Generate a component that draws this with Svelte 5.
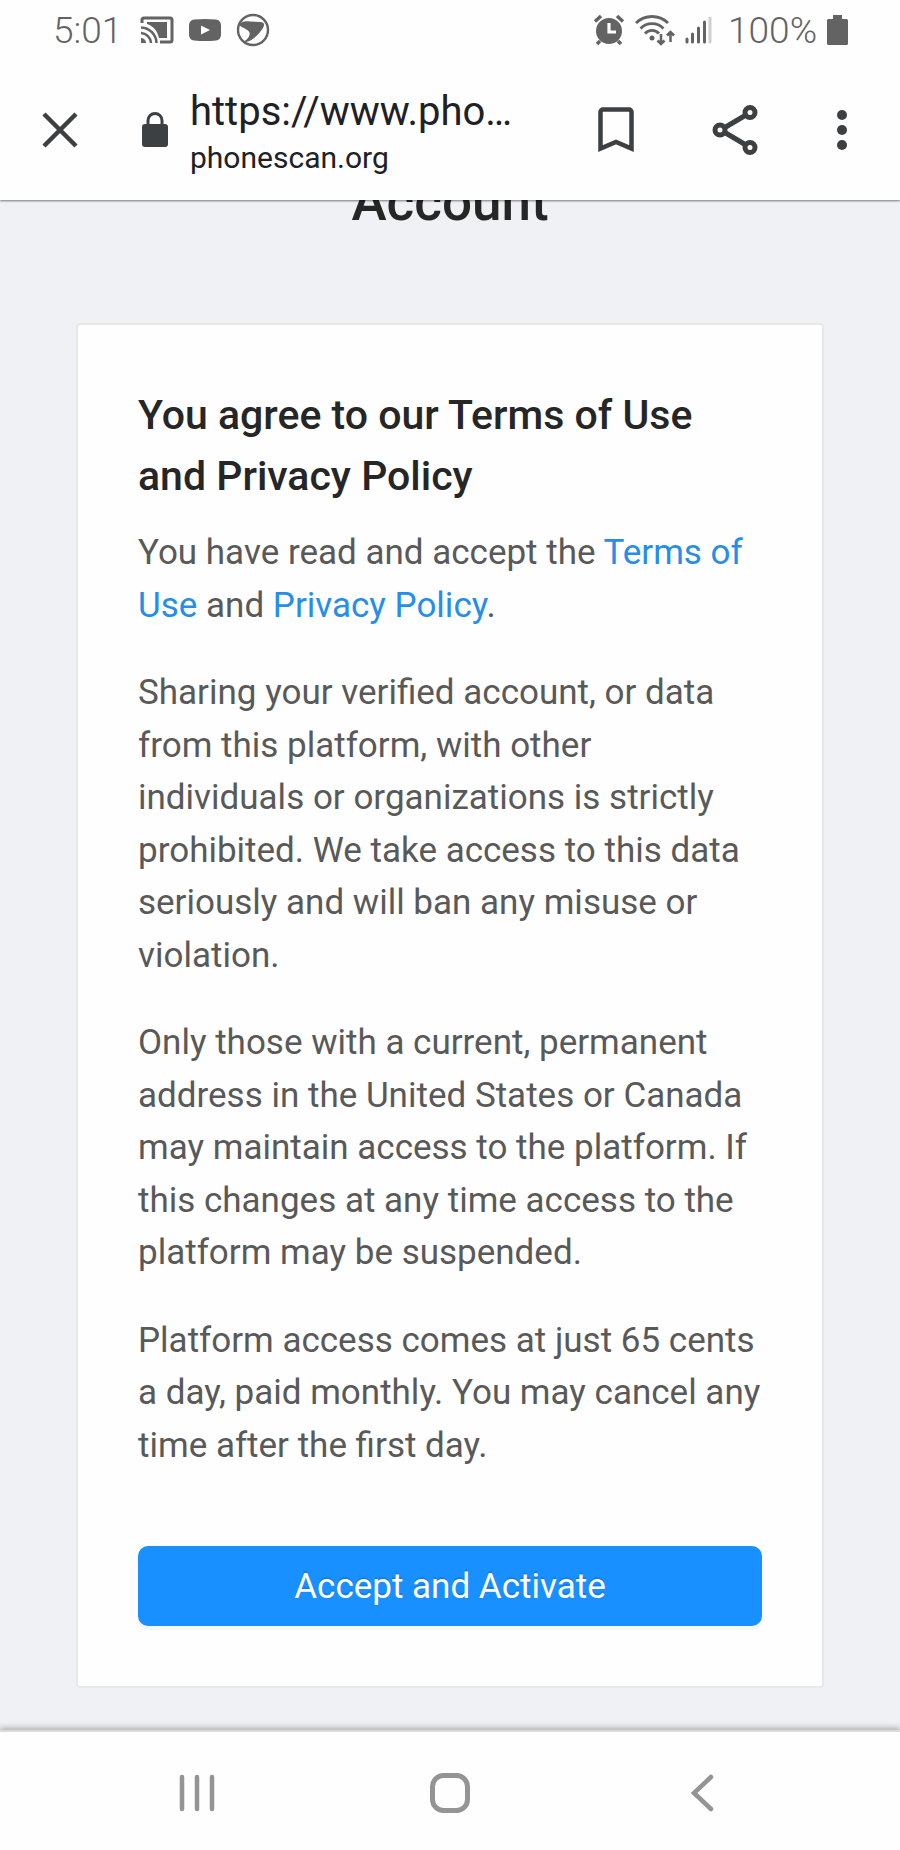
<script lang="ts">
  /**
   * Account agreement page, shown inside a mobile in-app browser
   */

  const url = "https://www.phonescan.org/account";
  const host = "phonescan.org";

  const terms: string[] = [
    "Sharing your verified account, or data from this platform, with other individuals or organizations is strictly prohibited. We take access to this data seriously and will ban any misuse or violation.",
    "Only those with a current, permanent address in the United States or Canada may maintain access to the platform. If this changes at any time access to the platform may be suspended.",
    "Platform access comes at just 65 cents a day, paid monthly. You may cancel any time after the first day.",
  ];

  let accepted = $state(false);
</script>

<div class="screen">
  <div class="top">
    <div class="status-bar">
      <div class="status-group">
        <span>5:01</span>
        <svg class="cast" width="34" height="28" viewBox="0 0 34 28" fill="none">
          <path d="M2 7V4a2 2 0 0 1 2-2h26a2 2 0 0 1 2 2v20a2 2 0 0 1-2 2H20" stroke="currentColor" stroke-width="3" />
          <path d="M7 6h20v16h-8C17 14 13 10 7 8z" fill="currentColor" />
          <path d="M1 11.500a16 16 0 0 1 15.500 15.500M1 17a10.500 10.500 0 0 1 10 10" stroke="currentColor" stroke-width="2.500" />
          <path d="M1 22a5 5 0 0 1 5 5H1z" fill="currentColor" />
        </svg>
        <svg width="34" height="24" viewBox="0 0 34 24">
          <path
            fill="currentColor"
            fill-rule="evenodd"
            d="M6 1.500Q17 .5 28 1.500Q32.500 2 33 7V17Q32.500 22 28 22.500Q17 23.500 6 22.500Q1.500 22 1 17V7Q1.500 2 6 1.500zM13 7.500v9l9-4.500z"
          />
        </svg>
        <svg width="34" height="34" viewBox="0 0 34 34" fill="none">
          <circle cx="17" cy="17" r="15" stroke="currentColor" stroke-width="2.400" />
          <path
            fill="currentColor"
            d="M3 12C6 8 9 8 14 8.500L25 9C28.500 9.500 28.500 12 27.500 14C24 20 18 27 10 29L8 28.500C13 25 14 22 13.500 19.500C12 16 6 15 3 12z"
          />
        </svg>
      </div>
      <div class="status-group right">
        <svg width="32" height="32" viewBox="0 0 32 32" fill="none">
          <path d="M2 7.500 8 2M24 2l6 5.500M7 27l-3 3M25 27l3 3" stroke="currentColor" stroke-width="3.500" />
          <circle cx="16" cy="17" r="13" fill="currentColor" />
          <path d="M16 9v9h7" stroke="#fff" stroke-width="3.200" />
        </svg>
        <svg width="40" height="32" viewBox="0 0 40 32" fill="none" stroke="currentColor">
          <path d="M1 9a23 23 0 0 1 32 0M5.500 14.500a16 16 0 0 1 23 0M10 19.500a9.500 9.500 0 0 1 14 0" stroke-width="2.800" />
          <circle cx="17" cy="24" r="2.500" fill="currentColor" stroke="none" />
          <path d="M26 20v10M22.500 26.500 26 30l3.500-3.500M35.500 28V18M32 21.500l3.500-3.500 3.500 3.500" stroke-width="2.500" />
        </svg>
        <svg width="27" height="30" viewBox="0 0 27 30" fill="none" stroke="currentColor" stroke-width="3" stroke-linecap="round">
          <path d="M2 24v3M7.500 19v8M13.500 13v14M19.500 7v20" />
          <path d="M25 3v24" opacity=".3" />
        </svg>
        <span class="percent">100%</span>
        <svg width="21" height="30" viewBox="0 0 21 30" fill="currentColor">
          <path d="M6 0h9v4h4.500Q21 4 21 5.500v23q0 1.500-1.500 1.500h-18Q0 30 0 28.500v-23Q0 4 1.500 4H6z" />
        </svg>
      </div>
    </div>

    <header class="toolbar">
      <button class="icon-btn" aria-label="Close">
        <svg width="36" height="36" viewBox="0 0 36 36" stroke="currentColor" stroke-width="4.500">
          <path d="m2 2 32 32M34 2 2 34" />
        </svg>
      </button>
      <svg class="lock" width="28" height="36" viewBox="0 0 28 36" fill="none">
        <rect x="1" y="12" width="26" height="23" rx="3" fill="currentColor" />
        <path d="M7 13V8.500a7 7 0 0 1 14 0V13" stroke="currentColor" stroke-width="3" />
      </svg>
      <div class="address">
        <div class="url">{url}</div>
        <div class="host">{host}</div>
      </div>
      <div class="actions">
        <button class="icon-btn" aria-label="Bookmark">
          <svg width="36" height="46" viewBox="0 0 36 46" fill="none">
            <path d="M2.500 41.500V5a2.500 2.500 0 0 1 2.500-2.500h26A2.500 2.500 0 0 1 33.500 5v36.500L18 35z" stroke="currentColor" stroke-width="4.500" />
          </svg>
        </button>
        <button class="icon-btn" aria-label="Share">
          <svg width="46" height="50" viewBox="0 0 46 50" fill="none" stroke="currentColor" stroke-width="5">
            <path d="m12 23 22-13M12 27l22 13" />
            <circle cx="8" cy="25" r="5" />
            <circle cx="38" cy="7.500" r="5" />
            <circle cx="38" cy="42.500" r="5" />
          </svg>
        </button>
        <button class="icon-btn" aria-label="More options">
          <svg width="12" height="42" viewBox="0 0 12 42" fill="currentColor">
            <circle cx="6" cy="6" r="5" />
            <circle cx="6" cy="21" r="5" />
            <circle cx="6" cy="36" r="5" />
          </svg>
        </button>
      </div>
    </header>
  </div>

  <main class="content">
    <h1>Account</h1>
    <section class="card">
      <h2>You agree to our Terms of Use and Privacy Policy</h2>
      <p>
        You have read and accept the <a href="#terms">Terms of Use</a> and
        <a href="#privacy">Privacy Policy</a>.
      </p>
      {#each terms as paragraph}
        <p>{paragraph}</p>
      {/each}
      <button class="accept" aria-pressed={accepted} onclick={() => (accepted = true)}>
        Accept and Activate
      </button>
    </section>
  </main>

  <nav class="nav-bar">
    <button class="icon-btn" aria-label="Recent apps">
      <svg width="40" height="42" viewBox="0 0 40 42" fill="none" stroke="currentColor" stroke-width="4.500" stroke-linecap="round">
        <path d="M5 5v32M20 5v32M35 5v32" />
      </svg>
    </button>
    <button class="icon-btn" aria-label="Home">
      <svg width="42" height="42" viewBox="0 0 42 42" fill="none">
        <rect x="3.500" y="3.500" width="35" height="35" rx="11" stroke="currentColor" stroke-width="5" />
      </svg>
    </button>
    <button class="icon-btn" aria-label="Back">
      <svg width="42" height="42" viewBox="0 0 42 42" fill="none" stroke="currentColor" stroke-width="4.500" stroke-linecap="round">
        <path d="M29 5 12 21l17 16" />
      </svg>
    </button>
  </nav>
</div>

<style>
  :global(body) {
    margin: 0;
    background: #fefefe;
  }

  .screen {
    display: flex;
    flex-direction: column;
    min-height: 100vh;
    font-family: Roboto, "Liberation Sans", sans-serif;
    background: #fefefe;
  }

  svg {
    display: block;
    flex: none;
  }

  .top {
    position: relative;
    z-index: 1;
    background: #fefefe;
    box-shadow: 0 1px 2px rgba(0, 0, 0, 0.5);
  }

  .status-bar {
    display: flex;
    align-items: center;
    justify-content: space-between;
    height: 60px;
    padding: 0 52px 0 53px;
    color: #636363;
    font-size: 37px;
    font-weight: 300;
    line-height: 60px;
  }

  .status-bar span {
    padding-top: 2px;
  }

  .status-group {
    display: flex;
    align-items: center;
    gap: 14px;
  }

  .status-group.right {
    gap: 10px;
  }

  .cast {
    margin-left: 4px;
  }

  .percent {
    margin-left: 6px;
  }

  .icon-btn {
    display: flex;
    align-items: center;
    justify-content: center;
    padding: 0;
    border: none;
    background: none;
    color: inherit;
    cursor: pointer;
  }

  .toolbar {
    display: flex;
    align-items: center;
    height: 140px;
    padding: 0 52px 0 42px;
    box-sizing: border-box;
    color: #3c4043;
  }

  .lock {
    margin: 0 21px 0 63px;
  }

  .address {
    flex: 1;
    min-width: 0;
    padding-top: 6px;
    color: #202124;
  }

  .url {
    overflow: hidden;
    font-size: 40px;
    line-height: 50px;
    text-overflow: ellipsis;
    white-space: nowrap;
  }

  .host {
    font-size: 30px;
    line-height: 42px;
  }

  .actions {
    display: flex;
    align-items: center;
    gap: 78px;
    margin-left: 76px;
  }

  .content {
    flex: 1;
    overflow: hidden;
    padding: 0 76px 40px;
    background: #f0f1f5;
  }

  /* the page is scrolled so the heading sits half under the toolbar */
  h1 {
    margin: -35px 0 83px;
    color: #262626;
    font-size: 53px;
    font-weight: 500;
    line-height: 75px;
    text-align: center;
  }

  .card {
    padding: 60px;
    border: 2px solid #e8e8e8;
    border-radius: 4px;
    background: #fefefe;
  }

  h2 {
    margin: 0 0 20px;
    color: #262626;
    font-size: 41px;
    font-weight: 500;
    line-height: 61px;
  }

  p {
    margin: 0 0 35px;
    color: #595959;
    font-size: 35px;
    line-height: 1.5;
  }

  a {
    color: #268ee8;
    text-decoration: none;
  }

  .accept {
    display: block;
    width: 100%;
    height: 80px;
    margin-top: 74px;
    border: none;
    border-radius: 10px;
    background: #1890ff;
    box-shadow: 0 4px 0 rgba(0, 0, 0, 0.03);
    color: #fff;
    font-family: inherit;
    font-size: 35px;
    text-shadow: 0 -2px 0 rgba(0, 0, 0, 0.12);
    cursor: pointer;
  }

  .nav-bar {
    position: relative;
    display: grid;
    grid-template-columns: repeat(3, 1fr);
    height: 120px;
    padding: 4px 71px 0;
    box-sizing: border-box;
    border-top: 2px solid #dcdcdc;
    background: #fefefe;
    box-shadow: 0 -2px 6px rgba(0, 0, 0, 0.3);
    color: #949494;
  }
</style>
